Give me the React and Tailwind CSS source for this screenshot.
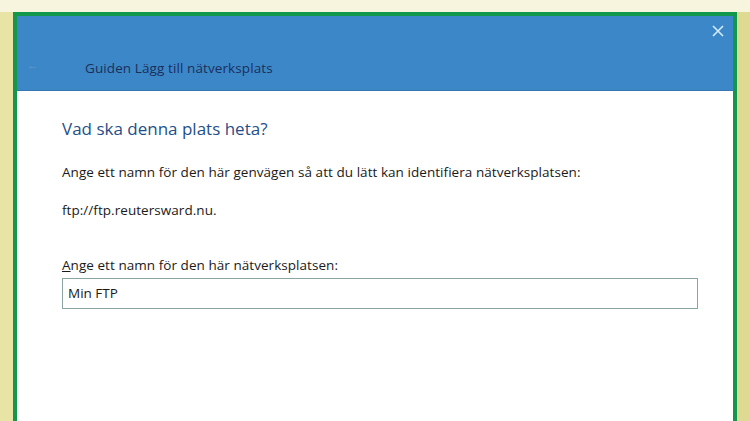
export default function App() {
  return (
    <div className="w-[750px] h-[421px] overflow-hidden bg-[#f8f5df] pt-[12px] flex flex-col" style={{ fontFamily: '"Open Sans", "Noto Sans", sans-serif' }}>
      <div className="flex flex-1 min-h-0">
        <div className="w-[13px] bg-[#e7e4a6]" />
        <div className="flex-1 border-[4px] border-b-0 border-[#13974c] bg-white flex flex-col min-h-0">
          <div className="h-[75px] bg-[#3c87c7] border-b border-[#3677b0] relative flex items-end pb-[13px]">
            <span className="absolute left-[10px] top-[43px] text-[11px] text-[#6f9cc4] leading-none">←</span>
            <span className="ml-[68px] text-[13.5px] leading-[18px] text-[#1b2f5c] tracking-[0.1px]">Guiden Lägg till nätverksplats</span>
            <svg className="absolute right-[9px] top-[9px]" width="12" height="12" viewBox="0 0 12 12">
              <path d="M1 1L11 11M11 1L1 11" stroke="#d6ecff" strokeWidth="1.6" />
            </svg>
          </div>
          <div className="pl-[45px] pr-[35px] pt-[26px]">
            <h1 className="text-[17px] leading-[24px] text-[#1f4f8a]">Vad ska denna plats heta?</h1>
            <p className="mt-[22px] text-[13.5px] leading-[18px] text-[#1a1a1a] tracking-[0.05px]">Ange ett namn för den här genvägen så att du lätt kan identifiera nätverksplatsen:</p>
            <p className="mt-[20px] text-[13.5px] leading-[18px] text-[#1a1a1a] tracking-[0.05px]">ftp://ftp.reutersward.nu.</p>
            <p className="mt-[37px] text-[13.5px] leading-[18px] text-[#1a1a1a] tracking-[0.05px]"><span className="underline">A</span>nge ett namn för den här nätverksplatsen:</p>
            <div className="mt-[4px] h-[31px] border border-[#8aa3a3] flex items-center pl-[5px] text-[13.5px] text-[#1a1a1a]">Min FTP</div>
          </div>
        </div>
        <div className="w-[13px] bg-[#dfda92]" />
      </div>
    </div>
  );
}
